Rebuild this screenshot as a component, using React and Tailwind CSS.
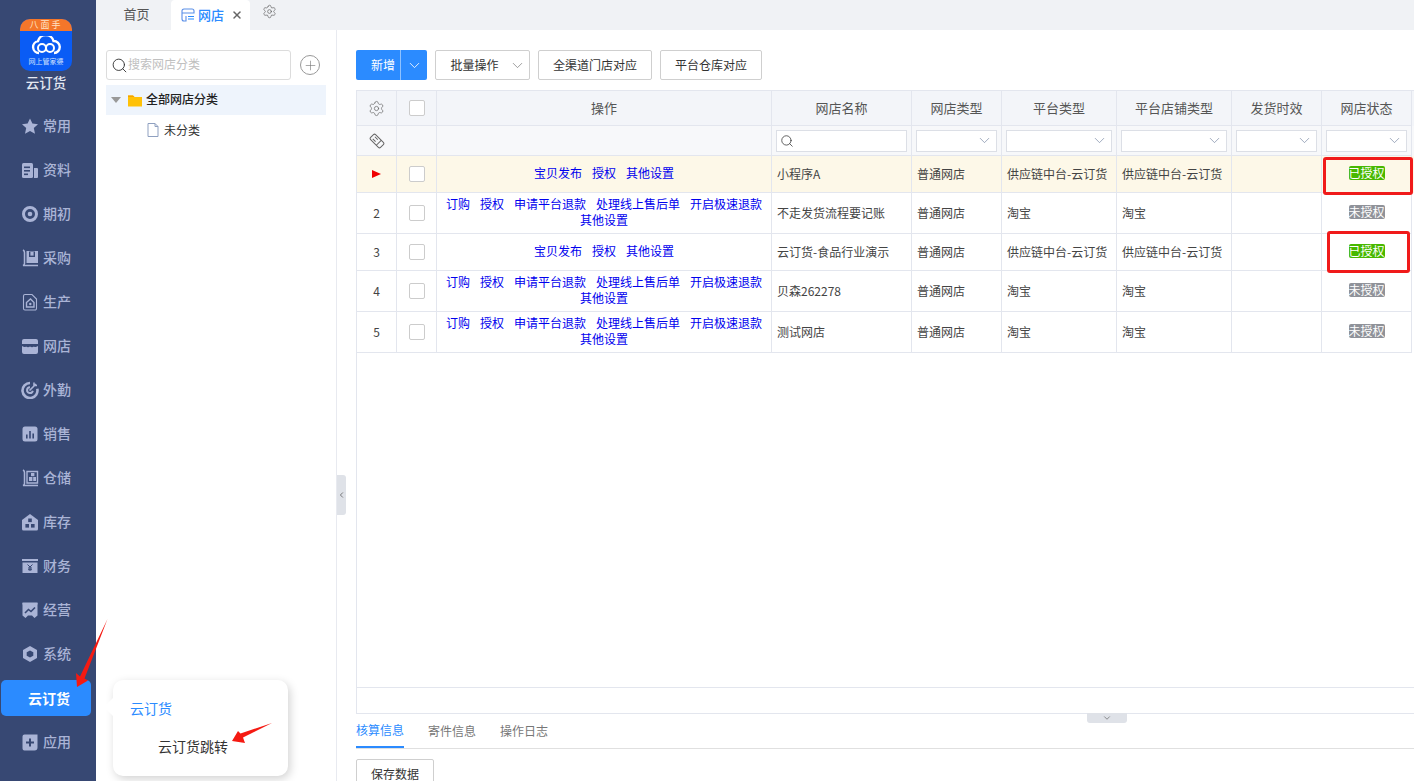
import React from "react";
import { Search, Settings, ChevronDown, ChevronLeft, X, Plus } from "lucide-react";

const C = "#aab4d6";
const B = "#374873";
const icons = {
  star: <polygon points="9,1.5 11.4,6.6 17,7.3 12.8,11.1 14,16.7 9,13.9 4,16.7 5.2,11.1 1,7.3 6.6,6.6" fill={C} />,
  doc: <g><rect x="1" y="2" width="11" height="15" rx="1.5" fill={C} /><rect x="3" y="5.5" width="6" height="1.6" fill={B} /><rect x="3" y="9" width="6" height="1.6" fill={B} /><rect x="3" y="12.5" width="4" height="1.6" fill={B} /><path d="M13 7h3a1 1 0 0 1 1 1v8a1 1 0 0 1-1 1h-3z" fill={C} /></g>,
  disc: <g><circle cx="9" cy="9" r="6.5" fill="none" stroke={C} strokeWidth="3" /><circle cx="9" cy="9" r="2.3" fill={C} /></g>,
  book: <g><path d="M2 1c1.2.6 1.5 1.2 1.5 2.5v11c0 1-.6 1.7-1.5 2h15" fill="none" stroke={C} strokeWidth="1.5" /><path d="M5.5 2H17v12H5.5z" fill={C} /><path d="M8 2.5h6v5.5H8z" fill={B} /><path d="M9.4 3h3.2v3.6H9.4z" fill={C} /></g>,
  file: <g><path d="M4 1.5h7l4.5 4.5v9.5a1.5 1.5 0 0 1-1.5 1.5H4a1.5 1.5 0 0 1-1.5-1.5V3A1.5 1.5 0 0 1 4 1.5z" fill="none" stroke={C} strokeWidth="1.1" /><path d="M5.5 9.5 9.5 6l3.5 3.5V14H5.5z" fill="none" stroke={C} strokeWidth="1.4" /><circle cx="9.3" cy="11" r="1.2" fill={C} /></g>,
  store: <g><path d="M3 2h12a2 2 0 0 1 2 2v3H1V4a2 2 0 0 1 2-2z" fill={C} /><path d="M1 9c2 1.3 3.2 1.3 4 .5 1.2 1 2.8 1 4 0 1.2 1 2.8 1 4 0 .8.8 2 .8 4-.5v6a2 2 0 0 1-2 2H3a2 2 0 0 1-2-2z" fill={C} /></g>,
  target: <g><path d="M9 2a7.5 7.5 0 1 0 7.3 5.8" fill="none" stroke={C} strokeWidth="2.6" /><path d="M9 6.2a2.9 2.9 0 1 0 2.8 3.5" fill="none" stroke={C} strokeWidth="2" /><path d="M8.5 9.5 15 3M13 1.5v3h3" fill="none" stroke={C} strokeWidth="1.6" /></g>,
  chart: <g><rect x="1.5" y="1.5" width="15" height="15" rx="2.5" fill={C} /><rect x="5" y="9.5" width="1.6" height="4" fill={B} /><rect x="8.2" y="6" width="1.6" height="7.5" fill={B} /><rect x="11.4" y="8.5" width="1.6" height="5" fill={B} /></g>,
  ware: <g><path d="M2 1c1.2.6 1.5 1.2 1.5 2.5v11c0 1-.6 1.7-1.5 2h15" fill="none" stroke={C} strokeWidth="1.5" /><path d="M6 2.5h10.5V14H6z" fill="none" stroke={C} strokeWidth="1.4" /><path d="M8 8h3.4v4H8zM12.2 8H15v4h-2.8z" fill={C} /><path d="M10 4h3.4v3.2H10z" fill={C} /></g>,
  home: <g><path d="M9 1 17 7v9a1.5 1.5 0 0 1-1.5 1.5h-13A1.5 1.5 0 0 1 1 16V7z" fill={C} /><rect x="7.2" y="5.5" width="3.6" height="3.6" fill={B} /><rect x="4.4" y="11" width="3.6" height="3.6" fill={B} /><rect x="10" y="11" width="3.6" height="3.6" fill={B} /></g>,
  money: <g><rect x="1" y="2" width="16" height="2" fill={C} /><path d="M1.5 5.5h15V16h-15z" fill={C} /><path d="M6.5 7.5 9 10l2.5-2.5M9 10v4M7 11h4M7 12.7h4" stroke={B} strokeWidth="1" fill="none" /></g>,
  awning: <g><path d="M1.5 2h15v12.5l-3 2.5-2.5-2.5H7L4.5 17l-3-2.5z" fill={C} /><rect x="1.5" y="1.5" width="15" height="2" fill={C} /><path d="M4 12l3.5-3.5 2.5 2 4-4" fill="none" stroke={B} strokeWidth="1.6" /></g>,
  hex: <g><path d="M9 1 16 5v8l-7 4-7-4V5z" fill={C} /><path d="M9 5.5 12.3 7.3v3.4L9 12.5 5.7 10.7V7.3z" fill={B} /></g>,
  plus: <g><path d="M3.5 1.5h13v13a3 3 0 0 1-3 3h-10a2 2 0 0 1-2-2v-12a2 2 0 0 1 2-2z" fill={C} /><path d="M5 9.5h8M9 5.5v8" stroke={B} strokeWidth="2" /></g>,
};

const nav = [
  ["star", "常用"], ["doc", "资料"], ["disc", "期初"], ["book", "采购"], ["file", "生产"],
  ["store", "网店"], ["target", "外勤"], ["chart", "销售"], ["ware", "仓储"], ["home", "库存"],
  ["money", "财务"], ["awning", "经营"], ["hex", "系统"],
];

function NavItem({ icon, label }) {
  return (
    <div className="h-[44px] flex items-center pl-[21px] gap-[4px] text-[14px] font-medium text-[#aab4d6]">
      <svg width="18" height="18" viewBox="0 0 18 18" className="shrink-0">{icons[icon]}</svg>
      <span className="-mt-[2px]">{label}</span>
    </div>
  );
}

function Sidebar() {
  return (
    <div className="w-[96px] shrink-0 bg-[#374873] flex flex-col">
      <div className="h-[104px] pt-[19px] pr-[4px] flex flex-col items-center">
        <div className="w-[52px] h-[52px] rounded-[10px] overflow-hidden bg-[#0a5cf5] flex flex-col items-center relative">
          <div className="w-full h-[12px] bg-[#f4762a] rounded-b-[26px/3px] text-[9px] leading-[12px] text-[#ffe3c4] text-center tracking-[2px]">八面手</div>
          <svg width="30" height="20" viewBox="0 0 30 20" className="mt-[5px]">
            <path d="M8 17a6 6 0 0 1-1-11.9A8 8 0 0 1 22.5 5 6 6 0 0 1 23 17" fill="none" stroke="#fff" strokeWidth="2.4" />
            <circle cx="11" cy="12" r="4" fill="none" stroke="#fff" strokeWidth="2" />
            <circle cx="19" cy="12" r="4" fill="none" stroke="#fff" strokeWidth="2" />
          </svg>
          <div className="text-[7px] leading-[9px] mt-[1px] text-[#cfe0ff] whitespace-nowrap">网上管家婆</div>
        </div>
        <div className="text-[13.5px] leading-[20px] mt-[1px] font-medium text-[#e4e8f2]">云订货</div>
      </div>
      {nav.map(([i, l]) => <NavItem key={l} icon={i} label={l} />)}
      <div className="h-[44px] flex items-center">
        <div className="ml-[1px] w-[90px] h-[36px] rounded-[5px] bg-[#2b8bff] text-white font-bold text-[14px] flex items-center justify-center pl-[6px]">云订货</div>
      </div>
      <NavItem icon="plus" label="应用" />
    </div>
  );
}

function TopTabs() {
  return (
    <div className="h-[30px] shrink-0 bg-[#f0f2f5] flex items-start text-[13px]">
      <div className="w-[75px] h-[28px] flex items-center justify-center pl-[6px] text-[#555]">首页</div>
      <div className="w-[79px] h-[30px] bg-white rounded-t-[4px] flex items-center pl-[10px]">
        <svg width="14" height="14" viewBox="0 0 14 14" fill="none" stroke="#5b8fe8" strokeWidth="1.1">
          <path d="M3 1h8a2 2 0 0 1 2 2v2H1V3a2 2 0 0 1 2-2zM1 5v6a2 2 0 0 0 2 2h2V8" />
          <path d="M7 8.5h6M7 11h6" stroke="#2b8bff" />
        </svg>
        <span className="ml-[3px] text-[#2b8bff] font-medium">网店</span>
        <X size={12} strokeWidth={3} color="#666" className="ml-[7px]" />
      </div>
      <Settings size={15} strokeWidth={1} color="#555" className="ml-[12px] mt-[4px]" />
    </div>
  );
}

function LeftPane() {
  return (
    <div className="w-[241px] shrink-0 border-r border-[#e8eaf0] pl-[10px] pr-[10px] pt-[20px] text-[12px]">
      <div className="flex items-center h-[30px]">
        <div className="w-[185px] h-[30px] border border-[#dcdcdc] rounded-[3px] flex items-center pl-[4px] text-[#c0c0c0]">
          <Search size={17} color="#333" strokeWidth={1.3} />
          <span className="-mt-[2px]">搜索网店分类</span>
        </div>
        <div className="ml-[9px] w-[20px] h-[20px] rounded-full border-[1.5px] border-[#999] flex items-center justify-center">
          <Plus size={15} strokeWidth={1} color="#777" />
        </div>
      </div>
      <div className="mt-[5px] h-[30px] bg-[#eef4fc] flex items-center font-medium text-[#222] pl-[5px]">
        <div className="w-0 h-0 border-l-[5px] border-r-[5px] border-t-[6px] border-l-transparent border-r-transparent border-t-[#999]" />
        <svg width="14" height="13" viewBox="0 0 14 13" className="ml-[7px]">
          <path d="M0 1.5h5l1.5 1.5H14v9.5H0z" fill="#ffc107" />
          <path d="M0 1.5h5l1.5 1.5H0z" fill="#f5a300" />
        </svg>
        <span className="ml-[4px] -mt-[2px]">全部网店分类</span>
      </div>
      <div className="h-[30px] flex items-center pl-[41px] text-[#333]">
        <svg width="12" height="14" viewBox="0 0 12 14" fill="none" stroke="#8fa0c0" strokeWidth="1">
          <path d="M1 .5h7l3 3v10H1zM8 .5v3h3" />
        </svg>
        <span className="ml-[5px] -mt-[1px]">未分类</span>
      </div>
    </div>
  );
}

function Btn({ className, children }) {
  return <div className={"h-[30px] border border-[#cfcfcf] rounded-[2px] text-[12px] text-[#333] flex items-center justify-center " + className}>{children}</div>;
}

const cell = "border-r border-b border-[#e3e6ee] flex items-center";
const heads = ["网店名称", "网店类型", "平台类型", "平台店铺类型", "发货时效", "网店状态"];

function Sel({ w }) {
  return (
    <div className={"h-[22px] bg-white border border-[#dcdfe6] flex items-center justify-end pr-[3px] " + w}>
      <ChevronDown size={17} strokeWidth={1} color="#7a8aa5" />
    </div>
  );
}

const shortOps = ["宝贝发布", "授权", "其他设置"];
const longOps = ["订购", "授权", "申请平台退款", "处理线上售后单", "开启极速退款", "其他设置"];
const rows = [
  { n: "1", cur: true, h: "h-[37px]", ops: shortOps, name: "小程序A", t: "普通网店", p: "供应链中台-云订货", s: "供应链中台-云订货", ok: true, bg: "bg-[#fdf8e8]" },
  { n: "2", h: "h-[41px]", ops: longOps, name: "不走发货流程要记账", t: "普通网店", p: "淘宝", s: "淘宝", ok: false, bg: "" },
  { n: "3", h: "h-[37px]", ops: shortOps, name: "云订货-食品行业演示", t: "普通网店", p: "供应链中台-云订货", s: "供应链中台-云订货", ok: true, bg: "" },
  { n: "4", h: "h-[41px]", ops: longOps, name: "贝森262278", t: "普通网店", p: "淘宝", s: "淘宝", ok: false, bg: "" },
  { n: "5", h: "h-[41px]", ops: longOps, name: "测试网店", t: "普通网店", p: "淘宝", s: "淘宝", ok: false, bg: "" },
];
const colsW = ["w-[40px]", "w-[40px]", "w-[335px]", "w-[140px]", "w-[90px]", "w-[115px]", "w-[115px]", "w-[90px]", "w-[90px]"];

function Check() {
  return <div className="w-[16px] h-[16px] bg-white border border-[#cccccc] rounded-[2px]" />;
}

function Row({ r }) {
  const txt = cell + " text-[12px] text-[#444] pl-[5px] whitespace-nowrap ";
  return (
    <div className={"flex " + r.h + " " + r.bg}>
      <div className={cell + " w-[40px] justify-center text-[12px] text-[#444]"}>
        {r.cur
          ? <div className="w-0 h-0 border-l-[9px] border-y-[4px] border-y-transparent border-l-[#f00000]" />
          : r.n}
      </div>
      <div className={cell + " w-[40px] justify-center"}><Check /></div>
      <div className={cell + " w-[335px] justify-center text-center text-[12px] leading-[16px] text-[#0000ee]"}>
        <div className="-mt-[3px]">
          {r.ops.map((o) => <span key={o} className="inline-block mx-[5px]">{o}</span>)}
        </div>
      </div>
      <div className={txt + "w-[140px]"}>{r.name}</div>
      <div className={txt + "w-[90px]"}>{r.t}</div>
      <div className={txt + "w-[115px]"}>{r.p}</div>
      <div className={txt + "w-[115px]"}>{r.s}</div>
      <div className={cell + " w-[90px]"} />
      <div className={cell + " w-[90px] justify-center"}>
        <span className={"h-[14px] w-[36px] rounded-[2px] text-white text-[12px] leading-[14px] text-center -mt-[2px] " + (r.ok ? "bg-[#47b800]" : "bg-[#8f9299]")}>{r.ok ? "已授权" : "未授权"}</span>
      </div>
    </div>
  );
}

function Table() {
  return (
    <div className="relative w-[1100px] h-[624px] shrink-0 border-l border-t border-b border-[#e3e6ee] flex flex-col">
      <div className="flex h-[35px] bg-[#f3f5f9] text-[13px] text-[#555]">
        <div className={cell + " w-[40px] justify-center"}><Settings size={17} strokeWidth={1} color="#666" /></div>
        <div className={cell + " w-[40px] justify-center"}><Check /></div>
        <div className={cell + " w-[335px] justify-center"}>操作</div>
        {heads.map((h, i) => <div key={h} className={cell + " justify-center " + colsW[i + 3]}>{h}</div>)}
      </div>
      <div className="flex h-[30px] bg-[#f7f8fa]">
        <div className={cell + " w-[40px] justify-center"}>
          <svg width="16" height="16" viewBox="0 0 16 16" fill="none" stroke="#666" strokeWidth="1">
            <g transform="rotate(45 8 8)">
              <rect x="1" y="4.5" width="14" height="7" rx="1.5" />
              <path d="M10.5 4.5v7M3.5 6.5h4M3.5 9.5h4" />
            </g>
          </svg>
        </div>
        <div className={cell + " w-[40px]"} />
        <div className={cell + " w-[335px]"} />
        <div className={cell + " w-[140px] pl-[4px]"}>
          <div className="w-[131px] h-[22px] bg-white border border-[#dcdfe6] flex items-center pl-[3px]">
            <Search size={14} strokeWidth={1.3} color="#333" />
          </div>
        </div>
        <div className={cell + " w-[90px] pl-[4px]"}><Sel w="w-[81px]" /></div>
        <div className={cell + " w-[115px] pl-[4px]"}><Sel w="w-[106px]" /></div>
        <div className={cell + " w-[115px] pl-[4px]"}><Sel w="w-[106px]" /></div>
        <div className={cell + " w-[90px] pl-[4px]"}><Sel w="w-[81px]" /></div>
        <div className={cell + " w-[90px] pl-[4px]"}><Sel w="w-[81px]" /></div>
      </div>
      {rows.map((r) => <Row key={r.n} r={r} />)}
      <div className="flex-1" />
      <div className="h-[26px] border-t border-[#e3e6ee]" />
      <div className="absolute left-[966px] top-[66px] w-[90px] h-[38px] border-[3px] border-[#f01a1a] rounded-[3px]" />
      <div className="absolute left-[970px] top-[140px] w-[83px] h-[42px] border-[3px] border-[#f01a1a] rounded-[3px]" />
      <div className="absolute left-[730px] -bottom-[10px] w-[40px] h-[10px] bg-[#dfe2e8] rounded-b-[3px] flex items-center justify-center">
        <ChevronDown size={10} strokeWidth={1.5} color="#555" />
      </div>
    </div>
  );
}

function RightPane() {
  return (
    <div className="flex-1 min-w-0 relative pl-[19px] pt-[20px] overflow-hidden">
      <div className="absolute left-0 top-[445px] w-[9px] h-[40px] bg-[#dfe2e8] rounded-r-[3px] flex items-center justify-center">
        <ChevronLeft size={10} strokeWidth={2} color="#555" />
      </div>
      <div className="flex h-[30px] gap-[8px] mb-[10px]">
        <div className="w-[71px] h-[30px] rounded-[2px] bg-[#2b8bff] text-white text-[12px] flex items-center">
          <span className="w-[45px] pl-[10px] text-center border-r border-[#8fc2ff] leading-[30px]">新增</span>
          <span className="flex-1 flex justify-center"><ChevronDown size={17} strokeWidth={1.2} color="#fff" /></span>
        </div>
        <Btn className="w-[95px] gap-[10px] pl-[11px]">
          <span>批量操作</span>
          <ChevronDown size={17} strokeWidth={1} color="#777" />
        </Btn>
        <Btn className="w-[114px]">全渠道门店对应</Btn>
        <Btn className="w-[102px]">平台仓库对应</Btn>
      </div>
      <Table />
      <div className="flex h-[35px] w-[1100px] border-b border-[#e0e0e0] text-[12px] text-[#777]">
        <div className="w-[48px] h-[34px] border-b-[2px] border-[#2b8bff] text-[#2b8bff] flex items-center justify-center">核算信息</div>
        <div className="ml-[24px] h-[34px] flex items-center">寄件信息</div>
        <div className="ml-[24px] h-[34px] flex items-center">操作日志</div>
      </div>
      <Btn className="w-[78px] mt-[10px]">保存数据</Btn>
    </div>
  );
}

export default function App() {
  return (
    <div className="relative w-[1414px] h-[781px] overflow-hidden flex bg-white font-['Noto_Sans_CJK_SC','Noto_Sans',sans-serif]">
      <Sidebar />
      <div className="flex-1 min-w-0 flex flex-col">
        <TopTabs />
        <div className="flex-1 min-h-0 flex">
          <LeftPane />
          <RightPane />
        </div>
      </div>
      <div className="absolute left-[113px] top-[680px] w-[175px] h-[96px] bg-white rounded-[10px] shadow-[2px_3px_10px_rgba(0,0,0,0.18)] text-[14px]">
        <div className="absolute -left-[9px] top-[18px] w-0 h-0 border-y-[9px] border-r-[9px] border-y-transparent border-r-white" />
        <div className="pl-[17px] pt-[19px] leading-[18px] text-[#2b8bff]">云订货</div>
        <div className="pl-[45px] pt-[20px] leading-[18px] text-[#333]">云订货跳转</div>
      </div>
      <svg className="absolute left-0 top-0 pointer-events-none" width="300" height="781" viewBox="0 0 300 781">
        <polygon points="107.5,619 84.5,678.5 88,680.5 77,687 76,673 80,676.5" fill="#f51a12" />
        <polygon points="272,723 243,737.5 245,743 232,741 238,731 240.5,733.5" fill="#f51a12" />
      </svg>
    </div>
  );
}
